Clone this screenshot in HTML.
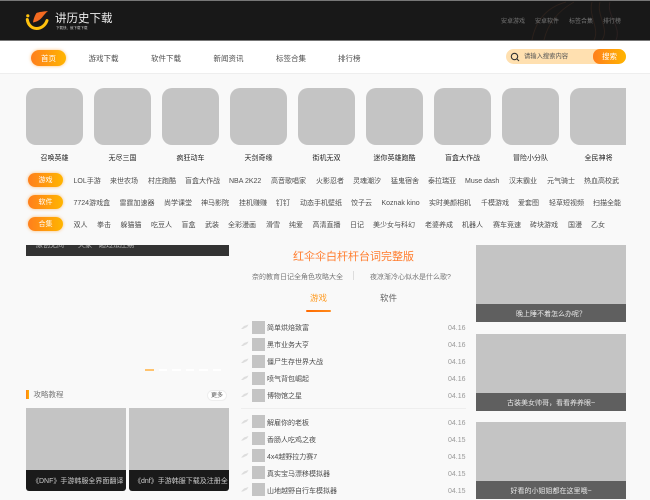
<!DOCTYPE html>
<html lang="zh"><head><meta charset="utf-8"><title>讲历史下载</title>
<style>
html,body{margin:0;padding:0}
body{width:650px;height:500px;overflow:hidden;position:relative;background:#f9f9f9;font-family:"Liberation Sans","Noto Sans CJK SC",sans-serif;color:#4d4d4d}
#w span,#w div,#w svg{position:absolute}
.t{white-space:nowrap;line-height:12px;font-size:7px}
.o{background:linear-gradient(90deg,#ff7f1c,#ffb500)}
.p{left:28px;width:35px;height:14px;border-radius:7px;box-shadow:0 0 3px rgba(255,150,30,.6);color:#fff;font-size:7px;line-height:16px;text-align:center}
.q{background:#c4c4c4}
.sq{top:88px;width:57px;height:57px;background:#c4c4c4;border-radius:10px}
.l{top:153px;width:68px;text-align:center;font-size:7px;line-height:12px;color:#222;white-space:nowrap}
.bar{left:476px;width:150px;height:18px;background:#5f5f5f;color:#e8e8e8;font-size:7px;line-height:21px;text-align:center;white-space:nowrap;overflow:hidden}
.th{left:251.500px;width:13px;height:13px;background:#c4c4c4}
.d{left:448px;font-size:7px;line-height:12px;color:#999}
</style></head><body><div id="w">
<div style="left:0;top:0;width:650px;height:41px;background:#181818;border-top:1px solid #777;border-bottom:1px solid #777;box-sizing:border-box"></div>
<svg style="left:530px;top:1px" width="100" height="39" viewBox="0 0 100 39" fill="none" stroke="#2b211c" stroke-width="1"><path d="M2 39C6 18 18 6 36 1M14 39C18 22 28 10 44 1M62 1C58 14 70 28 64 39M70 1C66 14 80 28 72 39"/><path d="M80 1C76 14 92 26 86 39" stroke="#2a2020"/></svg>
<svg style="left:25px;top:9px" width="24" height="22" viewBox="0 0 24 22"><path d="M23 2C18 2.500 14 3 11.500 4C10 6 8.500 10 8 13.500C11 13 14.500 11.500 17 8.500C19 6 20.500 4 23 2Z" fill="#f26a21"/><circle cx="2.800" cy="6.800" r="1.600" fill="#ffc20e"/><path d="M2.300 10.500C3 16 7 19.500 11.500 19.500C16.500 19.500 20.500 16 22 11.500" fill="none" stroke="#ffc20e" stroke-width="3" stroke-linecap="round"/></svg>
<span class="t" style="left:55px;top:13px;font-size:11.500px;color:#eee">讲历史下载</span>
<span class="t" style="left:56px;top:22px;font-size:3.500px;color:#ccc">下载快、就下载下载</span>
<span class="t" style="left:501px;top:16px;font-size:6px;color:#777">安卓游戏</span>
<span class="t" style="left:535px;top:16px;font-size:6px;color:#777">安卓软件</span>
<span class="t" style="left:569px;top:16px;font-size:6px;color:#777">标签合集</span>
<span class="t" style="left:603px;top:16px;font-size:6px;color:#777">排行榜</span>
<div style="left:0;top:41px;width:650px;height:32px;background:#fff;border-bottom:1px solid #eee"></div>
<div class="o" style="left:31px;top:49.500px;width:35px;height:16px;border-radius:8px;box-shadow:0 0 3px rgba(255,150,30,.6);color:#fff;font-size:7.500px;line-height:18px;text-align:center">首页</div>
<span class="t" style="left:88.500px;top:53px;font-size:7.500px">游戏下载</span>
<span class="t" style="left:151px;top:53px;font-size:7.500px">软件下载</span>
<span class="t" style="left:213.500px;top:53px;font-size:7.500px">新闻资讯</span>
<span class="t" style="left:276px;top:53px;font-size:7.500px">标签合集</span>
<span class="t" style="left:338px;top:53px;font-size:7.500px">排行榜</span>
<div style="left:506px;top:49px;width:120px;height:14.500px;border-radius:7.500px;background:#ffe0b0"></div>
<div class="o" style="left:593px;top:49px;width:33px;height:14.500px;border-radius:7px 7.500px 7.500px 7px;color:#fff;font-size:7.500px;line-height:15px;text-align:center">搜索</div>
<svg style="left:510px;top:51.500px" width="10" height="10" viewBox="0 0 10 10" fill="none" stroke="#333" stroke-width="1.100"><circle cx="4.500" cy="4.500" r="3.200"/><path d="M7 7L9 9"/></svg>
<span class="t" style="left:524px;top:51px;font-size:6.300px;color:#555">请输入搜索内容</span>

<div class="sq" style="left:26px"></div><div class="sq" style="left:94px"></div><div class="sq" style="left:162px"></div><div class="sq" style="left:230px"></div><div class="sq" style="left:298px"></div><div class="sq" style="left:366px"></div><div class="sq" style="left:434px"></div><div class="sq" style="left:502px"></div><div class="sq" style="left:570px;width:56px;border-radius:10px 0 0 10px"></div>
<span class="l" style="left:20.500px">召唤英雄</span><span class="l" style="left:88.500px">无尽三国</span><span class="l" style="left:156.500px">疯狂动车</span><span class="l" style="left:224.500px">天剑奇缘</span><span class="l" style="left:292.500px">街机无双</span><span class="l" style="left:360.500px">迷你英雄跑酷</span><span class="l" style="left:428.500px">盲盒大作战</span><span class="l" style="left:496.500px">冒险小分队</span><span class="l" style="left:564.500px">全民神将</span>

<div class="p o" style="top:173px">游戏</div><div class="p o" style="top:195px">软件</div><div class="p o" style="top:217px">合集</div>
<span class="t" style="left:73.500px;top:176px">LOL手游</span><span class="t" style="left:110px;top:176px">来世农场</span><span class="t" style="left:148px;top:176px">村庄跑酷</span><span class="t" style="left:185px;top:176px">盲盒大作战</span><span class="t" style="left:229px;top:176px">NBA 2K22</span><span class="t" style="left:271px;top:176px">高音歌唱家</span><span class="t" style="left:316px;top:176px">火影忍者</span><span class="t" style="left:353px;top:176px">灵魂潮汐</span><span class="t" style="left:391px;top:176px">猛鬼宿舍</span><span class="t" style="left:428px;top:176px">泰拉瑞亚</span><span class="t" style="left:465px;top:176px">Muse dash</span><span class="t" style="left:509px;top:176px">汉末霸业</span><span class="t" style="left:547px;top:176px">元气骑士</span><span class="t" style="left:584px;top:176px">热血高校武</span>
<span class="t" style="left:73.500px;top:198px">7724游戏盒</span><span class="t" style="left:119.500px;top:198px">雷霆加速器</span><span class="t" style="left:164px;top:198px">尚学课堂</span><span class="t" style="left:201px;top:198px">神马影院</span><span class="t" style="left:239px;top:198px">挂机赚赚</span><span class="t" style="left:276px;top:198px">钉钉</span><span class="t" style="left:300px;top:198px">动态手机壁纸</span><span class="t" style="left:351px;top:198px">饺子云</span><span class="t" style="left:381.500px;top:198px">Koznak kino</span><span class="t" style="left:429px;top:198px">实时美颜相机</span><span class="t" style="left:481px;top:198px">千模游戏</span><span class="t" style="left:518px;top:198px">爱套图</span><span class="t" style="left:549px;top:198px">轻草短视频</span><span class="t" style="left:593px;top:198px">扫描全能</span>
<span class="t" style="left:73.500px;top:220px">双人</span><span class="t" style="left:97px;top:220px">拳击</span><span class="t" style="left:120.500px;top:220px">躲猫猫</span><span class="t" style="left:151px;top:220px">吃豆人</span><span class="t" style="left:181.500px;top:220px">盲盒</span><span class="t" style="left:205px;top:220px">武装</span><span class="t" style="left:228px;top:220px">全彩漫画</span><span class="t" style="left:266px;top:220px">滑雪</span><span class="t" style="left:289px;top:220px">纯爱</span><span class="t" style="left:312.500px;top:220px">高清直播</span><span class="t" style="left:350px;top:220px">日记</span><span class="t" style="left:373px;top:220px">美少女与科幻</span><span class="t" style="left:425px;top:220px">老婆养成</span><span class="t" style="left:462px;top:220px">机器人</span><span class="t" style="left:493px;top:220px">赛车竞速</span><span class="t" style="left:530px;top:220px">砖块游戏</span><span class="t" style="left:568px;top:220px">国漫</span><span class="t" style="left:591px;top:220px">乙女</span>

<div style="left:26px;top:245px;width:202.500px;height:10.500px;background:#333;overflow:hidden"><span class="t" style="left:10px;top:-5.500px;color:#bbb">原创无间一一天家一超过法庄期</span></div>
<div style="left:145px;top:369px;width:8.500px;height:1.500px;background:#ffc36e"></div>
<div style="left:158.500px;top:369px;width:8.500px;height:1.500px;background:#fff"></div><div style="left:172px;top:369px;width:8.500px;height:1.500px;background:#fff"></div><div style="left:185.500px;top:369px;width:8.500px;height:1.500px;background:#fff"></div><div style="left:199px;top:369px;width:8.500px;height:1.500px;background:#fff"></div><div style="left:212.500px;top:369px;width:8.500px;height:1.500px;background:#fff"></div>

<div class="o" style="left:26px;top:390px;width:2.500px;height:9px"></div>
<span class="t" style="left:33.500px;top:389px;font-size:7.500px;color:#777">攻略教程</span>
<div style="left:207px;top:389.500px;width:20px;height:11px;border-radius:5.500px;background:#fff;border:1px solid #eee;box-sizing:border-box;font-size:6px;line-height:10px;text-align:center;color:#555">更多</div>
<div class="q" style="left:26px;top:408px;width:100px;height:62px"></div>
<div class="q" style="left:129px;top:408px;width:99.500px;height:62px"></div>
<div style="left:26px;top:470px;width:100px;height:21px;background:#1a1a1a;border-radius:0 0 3px 3px;color:#ccc;font-size:7px;line-height:24px;white-space:nowrap;overflow:hidden;text-indent:6px">《DNF》手游韩服全界面翻译</div>
<div style="left:129px;top:470px;width:99.500px;height:21px;background:#1a1a1a;border-radius:0 0 3px 3px;color:#ccc;font-size:7px;line-height:24px;white-space:nowrap;overflow:hidden;text-indent:5px">《dnf》手游韩服下载及注册全</div>

<span class="t" style="left:293px;top:251px;font-size:11px;color:#ff7d2e">红伞伞白杆杆台词完整版</span>
<span class="t" style="left:252px;top:272px;color:#777">奈的教育日记全角色攻略大全</span>
<div style="left:353px;top:271px;width:1px;height:9px;background:#ddd"></div>
<span class="t" style="left:370px;top:272px;color:#777">夜凉渐冷心似水是什么歌?</span>
<span class="t" style="left:310px;top:291.500px;font-size:8.500px;color:#ff9a1f">游戏</span>
<span class="t" style="left:380px;top:291.500px;font-size:8.500px;color:#666">软件</span>
<div class="o" style="left:306px;top:309.500px;width:24.500px;height:2px;border-radius:1px;background:linear-gradient(90deg,#ff6a00,#ff8a1c)"></div>
<div style="left:241px;top:408px;width:225px;height:1px;background:#eee"></div>

<div class="th" style="top:320.500px"></div><div class="th" style="top:337.500px"></div><div class="th" style="top:354.500px"></div><div class="th" style="top:371.500px"></div><div class="th" style="top:388.500px"></div><div class="th" style="top:415px"></div><div class="th" style="top:432px"></div><div class="th" style="top:449px"></div><div class="th" style="top:466px"></div><div class="th" style="top:483px"></div>
<svg style="left:241px;top:0" width="9" height="500" viewBox="0 0 9 500" fill="#ddd"><path d="M0 329L3 326L7.500 324.500L6 327L2 329ZM0 346L3 343L7.500 341.500L6 344L2 346ZM0 363L3 360L7.500 358.500L6 361L2 363ZM0 380L3 377L7.500 375.500L6 378L2 380ZM0 397L3 394L7.500 392.500L6 395L2 397ZM0 423.500L3 420.500L7.500 419L6 421.500L2 423.500ZM0 440.500L3 437.500L7.500 436L6 438.500L2 440.500ZM0 457.500L3 454.500L7.500 453L6 455.500L2 457.500ZM0 474.500L3 471.500L7.500 470L6 472.500L2 474.500ZM0 491.500L3 488.500L7.500 487L6 489.500L2 491.500Z"/></svg>
<span class="t" style="left:267px;top:323px">简单烘焙致富</span><span class="d" style="top:323px">04.16</span>
<span class="t" style="left:267px;top:340px">黑市业务大亨</span><span class="d" style="top:340px">04.16</span>
<span class="t" style="left:267px;top:357px">僵尸生存世界大战</span><span class="d" style="top:357px">04.16</span>
<span class="t" style="left:267px;top:374px">喷气背包崛起</span><span class="d" style="top:374px">04.16</span>
<span class="t" style="left:267px;top:391px">博物馆之星</span><span class="d" style="top:391px">04.16</span>
<span class="t" style="left:267px;top:417.500px">解雇你的老板</span><span class="d" style="top:417.500px">04.16</span>
<span class="t" style="left:267px;top:434.500px">香肠人吃鸡之夜</span><span class="d" style="top:434.500px">04.15</span>
<span class="t" style="left:267px;top:451.500px">4x4越野拉力赛7</span><span class="d" style="top:451.500px">04.15</span>
<span class="t" style="left:267px;top:468.500px">真实宝马漂移模拟器</span><span class="d" style="top:468.500px">04.15</span>
<span class="t" style="left:267px;top:485.500px">山地越野自行车模拟器</span><span class="d" style="top:485.500px">04.15</span>

<div class="q" style="left:476px;top:245px;width:150px;height:59px"></div><div class="bar" style="top:304px">晚上睡不着怎么办呢？</div>
<div class="q" style="left:476px;top:334px;width:150px;height:59px"></div><div class="bar" style="top:393px">古装美女帅哥，看看养养眼~</div>
<div class="q" style="left:476px;top:422px;width:150px;height:59px"></div><div class="bar" style="top:481px">好看的小姐姐都在这里哦~</div>
</div></body></html>
